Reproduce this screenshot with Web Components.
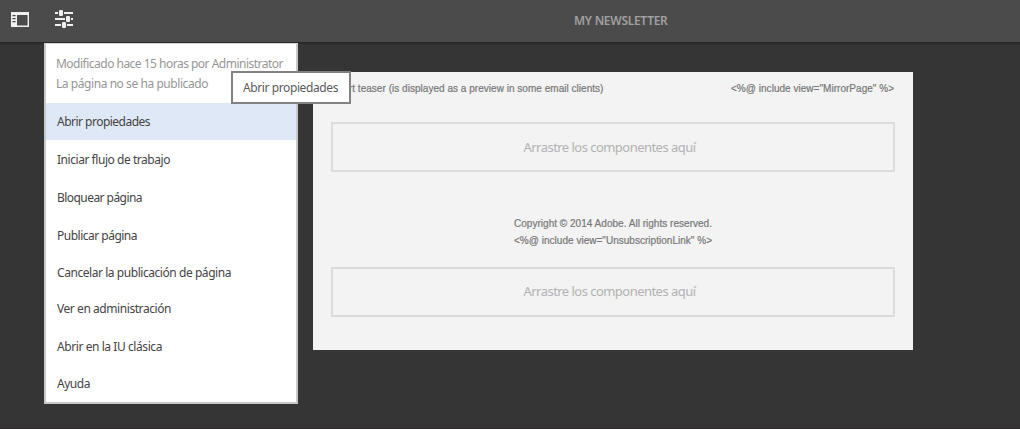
<!DOCTYPE html>
<html lang="es">
<head>
<meta charset="utf-8">
<title>My Newsletter</title>
<style>
html,body{margin:0;height:100%;overflow:hidden;background:#353535}
body{font-family:"Noto Sans","Open Sans",sans-serif;font-size:12px}
</style>
</head>
<body>
<page-editor></page-editor>
<script>
const define = (name, html, setup) => customElements.define(name, class extends HTMLElement {
  constructor() {
    super();
    this.attachShadow({mode: 'open'}).innerHTML = html;
  }
  connectedCallback() { if (setup) setup(this, this.shadowRoot); }
});

// A single line of text whose tracking is adjusted to fill the width given in "w".
define('fit-text', `<style>:host{display:inline-block;white-space:nowrap}span{display:inline-block}</style><span><slot></slot></span>`, (el, root) => {
  const span = root.querySelector('span'), w = +el.getAttribute('w');
  const n = el.textContent.length;
  const ls = (w - span.getBoundingClientRect().width) / n;
  span.style.letterSpacing = ls.toFixed(3) + 'px';
  el.style.width = w + 'px';
});

define('rail-icon', `<style>:host{display:block;width:18px;height:15px}svg{display:block}</style>
<svg width="18" height="15"><path fill="#f0f0f0" fill-rule="evenodd" d="M0 0h18v15H0zM6 3v10.4h10.6V3z"/><path fill="#4b4b4b" d="M1.4 3h3.2v1.2H1.4zM1.4 6h3.2v1.2H1.4zM1.4 9h3.2v1.2H1.4z"/></svg>`);

define('sliders-icon', `<style>:host{display:block;width:18px;height:18px}svg{display:block}</style>
<svg width="18" height="18"><g fill="#f0f0f0"><path d="M0 2h3v2H0zM9 2h9v2H9zM0 8h10v2H0zM16 8h2v2h-2zM0 14h6v2H0zM12 14h6v2h-6z"/><rect x="4" y="0" width="4" height="6" rx="1.2"/><rect x="11" y="6" width="4" height="6" rx="1.2"/><rect x="7" y="12" width="4" height="6" rx="1.2"/></g></svg>`);

define('top-bar', `<style>
:host{display:grid;grid-template-columns:574px 1fr;box-sizing:border-box;height:43px;background:#4b4b4b;border-bottom:1px solid #272727;box-shadow:0 1px 1px #2d2d2d}
nav{display:flex;gap:26px;padding:10px 0 0 11px}
rail-icon{margin-top:2px}
h1{margin:0;font-size:12px;line-height:41px;font-weight:600;color:#a0a0a0}
</style><nav><rail-icon></rail-icon><sliders-icon></sliders-icon></nav><h1><slot></slot></h1>`);

define('menu-item', `<style>
:host{display:flex;align-items:center;box-sizing:border-box;height:var(--h,38px);padding:0 0 var(--lift,1px) 11px;color:#444}
:host([active]){background:#dfe8f7}
:host([upper]){padding-bottom:0}
</style><slot></slot>`);

define('page-menu', `<style>
:host{display:block;position:relative;box-sizing:border-box;width:254px;height:361px;border:2px solid #c8c8c8;border-top:1px solid #d5d5d5;background:#fff}
header{height:49px;padding:10px 0 0 10px;line-height:20px;color:#969696}
header fit-text{display:block}
</style><header><slot name="status"></slot></header><slot></slot>`);

define('drop-zone', `<style>
:host{display:flex;align-items:center;justify-content:center;box-sizing:border-box;height:50px;padding-right:7px;border:2px solid #dcdcdc;font-size:13px;font-weight:400;color:#b2b2b2}
</style><fit-text w="172">Arrastre los componentes aquí</fit-text>`);

define('tool-tip', `<style>
:host{display:flex;align-items:center;box-sizing:border-box;width:120px;height:33px;padding-left:10px;border:2px solid #828282;background:#fff;color:#5a5a5a}
</style><slot></slot>`);

define('mail-page', `<style>
:host{display:block;box-sizing:border-box;width:600px;height:278px;padding:0 18px;background:#f3f3f3;color:#777;font-family:"Liberation Sans",Arial,sans-serif;font-size:10px;-webkit-text-stroke:.2px #777}
header{display:flex;justify-content:space-between;box-sizing:border-box;height:50px;padding:8px 1px 0 0;line-height:17px}
footer{display:flex;flex-direction:column;align-items:center;box-sizing:border-box;height:95px;padding-top:43px;line-height:17px}
drop-zone{font-family:"Noto Sans","Open Sans",sans-serif;-webkit-text-stroke:0}
drop-zone.last{padding-bottom:2px}
</style>
<header><fit-text w="272.5">Short teaser (is displayed as a preview in some email clients)</fit-text><fit-text w="163">&lt;%@ include view="MirrorPage" %&gt;</fit-text></header>
<drop-zone></drop-zone>
<footer><fit-text w="198">Copyright © 2014 Adobe. All rights reserved.</fit-text><fit-text w="198">&lt;%@ include view="UnsubscriptionLink" %&gt;</fit-text></footer>
<drop-zone class="last"></drop-zone>`);

define('page-editor', `<style>
:host{display:block;position:relative;box-sizing:border-box;height:429px;background:#353535;border-bottom:1px solid #2d292c}
main{display:flex;gap:15px;align-items:flex-start;padding-left:44px}
mail-page{margin-top:29px}
tool-tip{position:absolute;left:231px;top:71px}
[slot=status]{display:block}
</style>
<top-bar><fit-text w="93.5">MY NEWSLETTER</fit-text></top-bar>
<main>
<page-menu>
<fit-text slot="status" w="227">Modificado hace 15 horas por Administrator</fit-text>
<fit-text slot="status" w="152">La página no se ha publicado</fit-text>
<menu-item active upper style="--h:37px"><fit-text w="93">Abrir propiedades</fit-text></menu-item>
<menu-item upper style="--h:39px"><fit-text w="113">Iniciar flujo de trabajo</fit-text></menu-item>
<menu-item><fit-text w="85">Bloquear página</fit-text></menu-item>
<menu-item><fit-text w="80">Publicar página</fit-text></menu-item>
<menu-item style="--h:36px"><fit-text w="174">Cancelar la publicación de página</fit-text></menu-item>
<menu-item style="--h:37px;--lift:2px"><fit-text w="114">Ver en administración</fit-text></menu-item>
<menu-item><fit-text w="105">Abrir en la IU clásica</fit-text></menu-item>
<menu-item style="--h:36px"><fit-text w="33">Ayuda</fit-text></menu-item>
</page-menu>
<mail-page></mail-page>
</main>
<tool-tip><fit-text w="95">Abrir propiedades</fit-text></tool-tip>`);
</script>
</body>
</html>
